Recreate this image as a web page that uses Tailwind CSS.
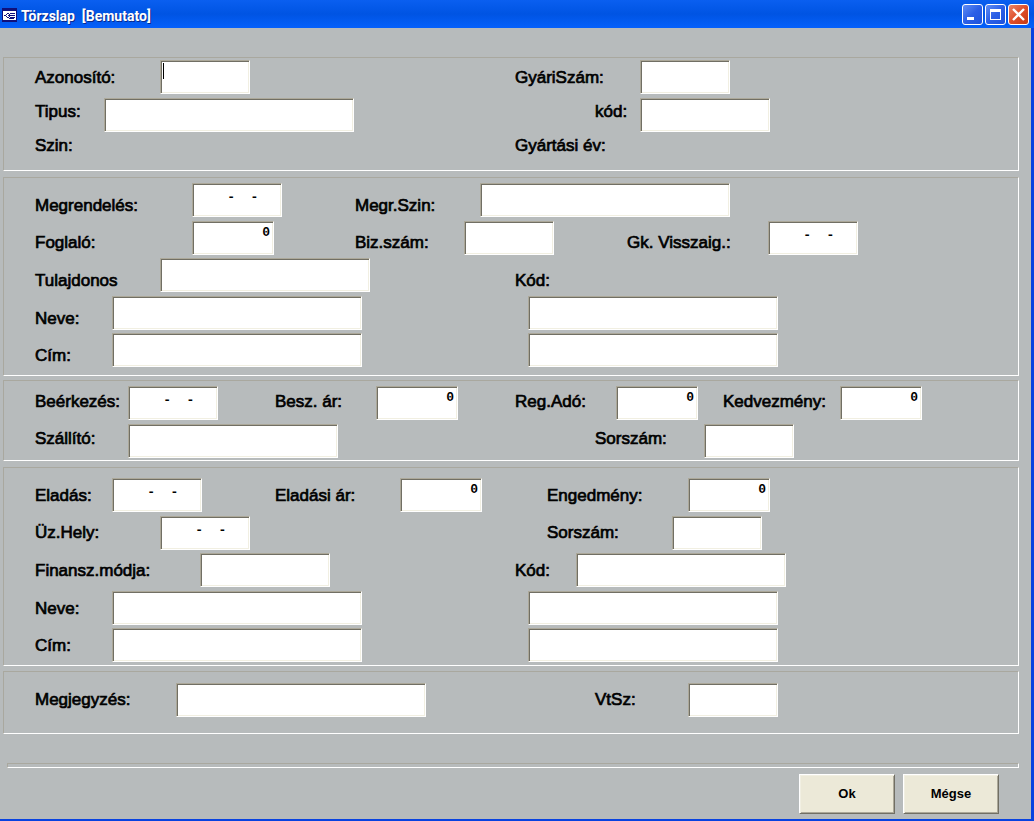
<!DOCTYPE html>
<html lang="hu">
<head>
<meta charset="utf-8">
<title>Törzslap [Bemutato]</title>
<script src="https://cdn.jsdelivr.net/npm/@tailwindcss/browser@4"></script>
</head>
<body class="bg-[#b7bbbc] font-['Liberation_Sans',sans-serif] text-black">
<div class="flex min-h-screen flex-col border-r-3 border-b-2 border-[#0842e0]">
  <header class="-mr-[3px] flex h-7 items-center bg-linear-to-b from-[#0a5ff0] via-[#0054e3] via-50% to-[#0560fb] pr-[5px] pl-[2px]">
    <svg class="mt-px h-[14px] w-[15px]" viewBox="0 0 15 14" shape-rendering="crispEdges" aria-hidden="true">
      <rect width="15" height="14" fill="#10107b"/><path d="M1 3h13v9H1z" fill="#fff"/>
      <path d="M5 5h2v1H5zM4 6h1v1H4zM2 7h2v1H2zM4 8h1v1H4zM5 9h2v1H5zM8 5h5v1H8zM6 7h7v1H6zM8 9h5v1H8zM7 6h1v1H7zM7 8h1v1H7zM7 10h5v1H7z" fill="#10107b"/>
    </svg>
    <h1 class="ml-1 flex-1 pt-[3px] font-['Roboto',sans-serif] text-[14px] leading-4 font-bold whitespace-pre text-white [text-shadow:1px_1px_#0a2a8c]">Törzslap  [Bemutato]</h1>
    <div class="flex gap-[2px] pt-px">
      <button type="button" aria-label="Kis méret" class="h-[21px] w-[21px] rounded-[3px] border border-white bg-linear-to-br from-[#5f8cf4] via-[#2c5fe6] to-[#1d52dc]">
        <svg viewBox="0 0 19 19" class="h-[19px] w-[19px]"><path d="M4 12h7v3H4z" fill="#fff"/></svg>
      </button>
      <button type="button" aria-label="Teljes méret" class="h-[21px] w-[21px] rounded-[3px] border border-white bg-linear-to-br from-[#5f8cf4] via-[#2c5fe6] to-[#1d52dc]">
        <svg viewBox="0 0 19 19" class="h-[19px] w-[19px]"><path fill-rule="evenodd" d="M4 4h11v11H4zM5 7v7h9V7z" fill="#fff"/></svg>
      </button>
      <button type="button" aria-label="Bezárás" class="h-[21px] w-[21px] rounded-[3px] border border-white bg-linear-to-br from-[#ec8466] via-[#de4e2a] to-[#c63a12]">
        <svg viewBox="0 0 19 19" class="h-[19px] w-[19px]"><path d="M4 4l11 11M15 4l-11 11" stroke="#fff" stroke-width="2.4"/></svg>
      </button>
    </div>
  </header>

  <form class="flex flex-1 flex-col pt-[29px] pr-3 pl-[3px] text-[17px] leading-5 whitespace-nowrap [&_label]:[-webkit-text-stroke:0.04em_black] [&_span]:[-webkit-text-stroke:0.04em_black] [&_label]:shrink-0 [&_input]:h-[34px] [&_input]:shrink-0 [&_input]:border [&_input]:border-t-[#aca899] [&_input]:border-l-[#aca899] [&_input]:border-r-white [&_input]:border-b-white [&_input]:bg-white [&_input]:pr-[3px] [&_input]:pl-[3px] [&_input]:font-['Liberation_Mono',monospace] [&_input]:text-[13px] [&_input]:font-bold [&_input]:shadow-[inset_1px_1px_#716f64,inset_-1px_-1px_#f1efe2] [&_input]:outline-none">

    <section class="border border-t-[#a9a89f] border-r-white border-b-white border-l-[#a9a89f] pt-[2px] pl-[31px]">
      <div class="flex h-[38px]">
        <label for="azon" class="w-[125px] pt-2">Azonosító:</label>
        <div class="relative flex"><input id="azon" class="w-[90px]"><i class="absolute top-[3px] left-[3px] h-4 w-px bg-black"></i></div>
        <label for="gyszam" class="ml-[265px] w-[125px] pt-2">GyáriSzám:</label><input id="gyszam" class="w-[90px]">
      </div>
      <div class="flex h-[38px]">
        <label for="tipus" class="w-[69px] pt-1">Tipus:</label><input id="tipus" class="w-[250px]">
        <label for="kod1" class="ml-[241px] w-[45px] pt-1">kód:</label><input id="kod1" class="w-[130px]">
      </div>
      <div class="flex h-[34px]"><span class="w-[480px]">Szin:</span><span>Gyártási év:</span></div>
    </section>

    <section class="mt-[6px] border border-t-[#a9a89f] border-r-white border-b-white border-l-[#a9a89f] pt-[5px] pb-[5px] pl-[31px]">
      <div class="flex h-[38px]">
        <label for="megr" class="w-[157px] pt-[13px]">Megrendelés:</label><input id="megr" class="w-[90px] pb-[6px]" value="    -  -">
        <label for="mszin" class="ml-[73px] w-[125px] pt-[13px]">Megr.Szin:</label><input id="mszin" class="w-[250px]">
      </div>
      <div class="flex h-[37px]">
        <label for="fogl" class="w-[157px] pt-3">Foglaló:</label><input id="fogl" class="w-[82px] pb-3 text-right" value="0">
        <label for="biz" class="ml-[81px] w-[109px] pt-3">Biz.szám:</label><input id="biz" class="w-[90px]">
        <label for="gk" class="ml-[73px] w-[141px] pt-3">Gk. Visszaig.:</label><input id="gk" class="w-[90px] pb-[6px]" value="    -  -">
      </div>
      <div class="flex h-[38px]">
        <label for="tulaj" class="w-[125px] pt-[13px]">Tulajdonos</label><input id="tulaj" class="w-[210px]">
        <span class="ml-[145px] pt-[13px]">Kód:</span>
      </div>
      <div class="flex h-[37px]">
        <label for="neve1" class="w-[77px] pt-[13px]">Neve:</label><input id="neve1" class="w-[250px]">
        <input aria-label="Neve 2" class="ml-[166px] w-[250px]">
      </div>
      <div class="flex h-[37px]">
        <label for="cim1" class="w-[77px] pt-[13px]">Cím:</label><input id="cim1" class="w-[250px]">
        <input aria-label="Cím 2" class="ml-[166px] w-[250px]">
      </div>
    </section>

    <section class="mt-1 border border-t-[#a9a89f] border-r-white border-b-white border-l-[#a9a89f] pt-[5px] pl-[31px]">
      <div class="flex h-[38px]">
        <label for="beerk" class="w-[93px] pt-[6px]">Beérkezés:</label><input id="beerk" class="w-[90px] pb-[6px]" value="    -  -">
        <label for="besz" class="ml-[57px] w-[101px] pt-[6px]">Besz. ár:</label><input id="besz" class="w-[82px] pb-3 text-right" value="0">
        <label for="reg" class="ml-[57px] w-[101px] pt-[6px]">Reg.Adó:</label><input id="reg" class="w-[82px] pb-3 text-right" value="0">
        <label for="kedv" class="ml-[25px] w-[117px] pt-[6px]">Kedvezmény:</label><input id="kedv" class="w-[82px] pb-3 text-right" value="0">
      </div>
      <div class="flex h-9">
        <label for="szall" class="w-[93px] pt-[5px]">Szállító:</label><input id="szall" class="w-[210px]">
        <label for="sor1" class="ml-[257px] w-[109px] pt-[5px]">Sorszám:</label><input id="sor1" class="w-[90px]">
      </div>
    </section>

    <section class="mt-[6px] border border-t-[#a9a89f] border-r-white border-b-white border-l-[#a9a89f] pt-[10px] pl-[31px]">
      <div class="flex h-[38px]">
        <label for="elad" class="w-[77px] pt-2">Eladás:</label><input id="elad" class="w-[90px] pb-[6px]" value="    -  -">
        <label for="elar" class="ml-[73px] w-[125px] pt-2">Eladási ár:</label><input id="elar" class="w-[82px] pb-3 text-right" value="0">
        <label for="eng" class="ml-[65px] w-[141px] pt-2">Engedmény:</label><input id="eng" class="w-[82px] pb-3 text-right" value="0">
      </div>
      <div class="flex h-[37px]">
        <label for="uz" class="w-[125px] pt-[7px]">Üz.Hely:</label><input id="uz" class="w-[90px] pb-[6px]" value="    -  -">
        <label for="sor2" class="ml-[297px] w-[125px] pt-[7px]">Sorszám:</label><input id="sor2" class="w-[90px]">
      </div>
      <div class="flex h-[38px]">
        <label for="fin" class="w-[165px] pt-2">Finansz.módja:</label><input id="fin" class="w-[130px]">
        <label for="kod2" class="ml-[185px] w-[61px] pt-2">Kód:</label><input id="kod2" class="w-[210px]">
      </div>
      <div class="flex h-[37px]">
        <label for="neve2" class="w-[77px] pt-2">Neve:</label><input id="neve2" class="w-[250px]">
        <input aria-label="Neve 2" class="ml-[166px] w-[250px]">
      </div>
      <div class="flex h-[37px]">
        <label for="cim2" class="w-[77px] pt-2">Cím:</label><input id="cim2" class="w-[250px]">
        <input aria-label="Cím 2" class="ml-[166px] w-[250px]">
      </div>
    </section>

    <section class="mt-[5px] border border-t-[#a9a89f] border-r-white border-b-white border-l-[#a9a89f] pt-[11px] pb-4 pl-[31px]">
      <div class="flex">
        <label for="megj" class="w-[141px] pt-[7px]">Megjegyzés:</label><input id="megj" class="w-[250px]">
        <label for="vtsz" class="ml-[169px] w-[93px] pt-[7px]">VtSz:</label><input id="vtsz" class="w-[90px]">
      </div>
    </section>

    <div class="mt-[29px] ml-1 h-[5px] border border-t-[#a9a89f] border-r-white border-b-white border-l-[#a9a89f]"></div>

    <div class="mt-[6px] flex justify-end gap-2 pr-5 pb-1 text-[13px] font-bold">
      <button type="button" class="h-10 w-24 border border-t-white border-r-[#716f64] border-b-[#716f64] border-l-white bg-[#ece9d8] shadow-[inset_1px_1px_#f1efe2,inset_-1px_-1px_#aca899]">Ok</button>
      <button type="button" class="h-10 w-24 border border-t-white border-r-[#716f64] border-b-[#716f64] border-l-white bg-[#ece9d8] shadow-[inset_1px_1px_#f1efe2,inset_-1px_-1px_#aca899]">Mégse</button>
    </div>
  </form>
</div>
</body>
</html>
